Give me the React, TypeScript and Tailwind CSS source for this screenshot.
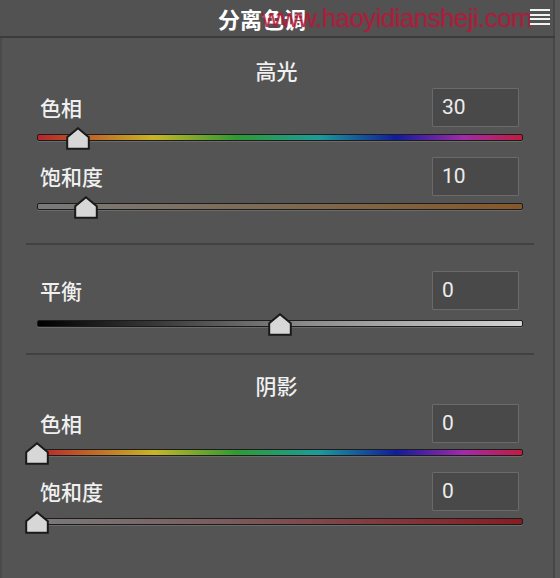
import type { CSSProperties } from "react";

const cjk = { fontFamily: '"Noto Sans CJK SC", "Noto Sans", sans-serif' } as CSSProperties;
const num = { fontFamily: 'Roboto, "Open Sans", sans-serif' } as CSSProperties;

type Track = {
  label: string;
  value: number;
  min: number;
  max: number;
  gradient: string;
};

const TRACK_WIDTH = 486;

function Thumb({ left }: { left: number }) {
  return (
    <svg
      className="absolute top-[-7px]"
      style={{ left: left - 12 }}
      width="24"
      height="23"
      viewBox="0 0 24 23"
    >
      <path d="M12 1.2 L22.8 10.2 V21.8 H1.2 V10.2 Z" fill="#d7d7d7" stroke="#1a1a1a" strokeWidth="2" strokeLinejoin="miter" />
    </svg>
  );
}

function Slider({ track, top }: { track: Track; top: string }) {
  const frac = (track.value - track.min) / (track.max - track.min);
  return (
    <div className={`relative ml-[37px] w-[486px] ${top}`}>
      <div
        className="h-[7px] rounded-[2px] border border-[#1c1c1c] shadow-[0_1px_0_#6b6b6b]"
        style={{ background: track.gradient }}
      />
      <Thumb left={frac * TRACK_WIDTH} />
    </div>
  );
}

function Row({ track, top }: { track: Track; top: string }) {
  return (
    <div className={`flex items-center justify-between pl-[40px] pr-[34px] ${top}`}>
      <span className="text-[21px] font-medium leading-none text-[#f0f0f0]" style={cjk}>
        {track.label}
      </span>
      <div className="flex h-[39px] w-[87px] items-center rounded-[1px] border border-[#6a6a6a] bg-[#494949] pl-[9px]">
        <span className="text-[21px] leading-none text-[#ececec]" style={num}>
          {track.value}
        </span>
      </div>
    </div>
  );
}

const hue =
  "linear-gradient(to right, #b8242a, #c8b624 24%, #2f9a34 41%, #1c9c9a 58%, #101c9c 74%, #a42aa8 88%, #c01c40)";

const highHue: Track = { label: "色相", value: 30, min: 0, max: 360, gradient: hue };
const highSat: Track = {
  label: "饱和度",
  value: 10,
  min: 0,
  max: 100,
  gradient: "linear-gradient(to right, #7a7a7a, #7d6a52 50%, #85582a)",
};
const balance: Track = {
  label: "平衡",
  value: 0,
  min: -100,
  max: 100,
  gradient: "linear-gradient(to right, #000000, #3a3a3a 25%, #8a8a8a 55%, #d4d4d4)",
};
const shadowHue: Track = { label: "色相", value: 0, min: 0, max: 360, gradient: hue };
const shadowSat: Track = {
  label: "饱和度",
  value: 0,
  min: 0,
  max: 100,
  gradient: "linear-gradient(to right, #7a7a7a, #7a5a5c 40%, #871c22)",
};

function Divider({ top }: { top: string }) {
  return <div className={`ml-[26px] h-[2px] w-[508px] bg-[#424242] ${top}`} />;
}

function SectionTitle({ text, top }: { text: string; top: string }) {
  return (
    <div className={`h-[24px] text-center text-[21px] font-medium leading-[24px] text-[#f0f0f0] ${top}`} style={cjk}>
      {text}
    </div>
  );
}

export default function App() {
  return (
    <div className="flex h-[578px] w-[560px] flex-col overflow-hidden bg-[#595959]">
      {/* panel header */}
      <div className="relative flex h-[36px] w-[555px] shrink-0 items-center border-r-2 border-[#474747] bg-[#525252]">
        <span className="ml-[218px] text-[22px] font-bold leading-none text-white" style={cjk}>
          分离色调
        </span>
        {/* site watermark stamped across the header */}
        <span
          className="pointer-events-none absolute left-[262px] top-[5px] text-[26px] leading-none tracking-[-0.6px] text-[rgba(186,22,56,0.7)] [text-shadow:0_0_1px_rgba(186,22,56,0.6)]"
          style={{ fontFamily: '"Liberation Sans", Arial, sans-serif' }}
        >
          www.haoyidiansheji.com
        </span>
        <div className="absolute left-[530px] top-[9px] flex w-[20px] flex-col gap-[2.5px] bg-[#525252]">
          <div className="h-[2px] bg-[#f2f2f2]" />
          <div className="h-[2px] bg-[#f2f2f2]" />
          <div className="h-[2px] bg-[#f2f2f2]" />
          <div className="h-[2px] bg-[#f2f2f2]" />
        </div>
      </div>
      <div className="h-[2px] w-[555px] shrink-0 bg-[#3b3b3b]" />

      {/* panel body */}
      <div className="w-[555px] flex-1 border-l-2 border-r-2 border-l-[#4a4a4a] border-r-[#474747] bg-[#545454]">
        <div className="ml-[-2px] w-[553px]">
          <SectionTitle text="高光" top="mt-[20px]" />
          <Row track={highHue} top="mt-[6px]" />
          <Slider track={highHue} top="mt-[7px]" />
          <Row track={highSat} top="mt-[16px]" />
          <Slider track={highSat} top="mt-[7px]" />

          <Divider top="mt-[33px]" />

          <Row track={balance} top="mt-[26px]" />
          <Slider track={balance} top="mt-[10px]" />

          <Divider top="mt-[26px]" />

          <SectionTitle text="阴影" top="mt-[18px]" />
          <Row track={shadowHue} top="mt-[7px]" />
          <Slider track={shadowHue} top="mt-[6px]" />
          <Row track={shadowSat} top="mt-[16px]" />
          <Slider track={shadowSat} top="mt-[7px]" />
        </div>
      </div>
    </div>
  );
}
